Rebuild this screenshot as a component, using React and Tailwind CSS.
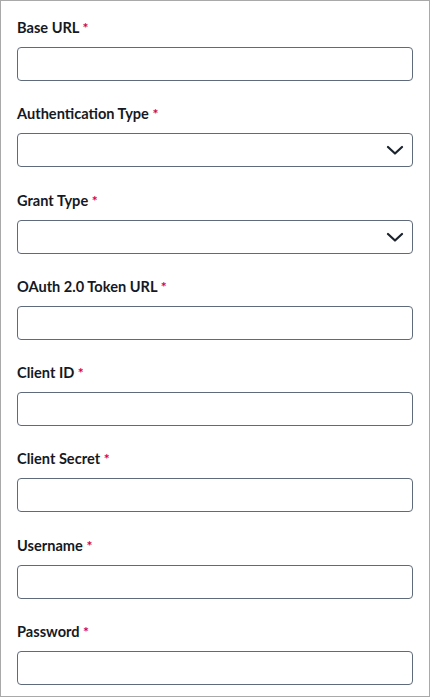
import React from 'react';

const fields = [
  { label: 'Base URL' },
  { label: 'Authentication Type', select: true },
  { label: 'Grant Type', select: true },
  { label: 'OAuth 2.0 Token URL' },
  { label: 'Client ID' },
  { label: 'Client Secret' },
  { label: 'Username' },
  { label: 'Password', type: 'password' },
];

function Chevron() {
  return (
    <svg width="18" height="10" viewBox="0 0 18 10" fill="none" className="text-[#1b232d]">
      <path d="M2 2 L9 8.5 L16 2" stroke="currentColor" strokeWidth="2.2" strokeLinecap="round" strokeLinejoin="round" />
    </svg>
  );
}

function Field({ label, select, type }) {
  return (
    <div className="flex flex-col">
      <label className="h-5 leading-5 mb-[9px] text-[14.6px] font-bold text-[#16191f]">
        {label} <span className="text-[14px] text-[#d1024e]">*</span>
      </label>
      {select ? (
        <button
          type="button"
          className="h-[34px] w-full flex items-center justify-end pr-[8px] bg-white border border-[#5f6b7a] rounded-[4px]"
        >
          <Chevron />
        </button>
      ) : (
        <input
          type={type || 'text'}
          className="h-[34px] w-full px-2 bg-white border border-[#5f6b7a] rounded-[4px] focus:outline-none"
        />
      )}
    </div>
  );
}

export default function App() {
  return (
    <div
      className="w-[430px] h-[697px] bg-white border border-[#a9a9a9] pt-[17px] px-4 overflow-hidden"
      style={{ fontFamily: 'Lato, "Open Sans", sans-serif' }}
    >
      <div className="flex flex-col gap-[23.3px]">
        {fields.map((f) => (
          <Field key={f.label} {...f} />
        ))}
      </div>
    </div>
  );
}
